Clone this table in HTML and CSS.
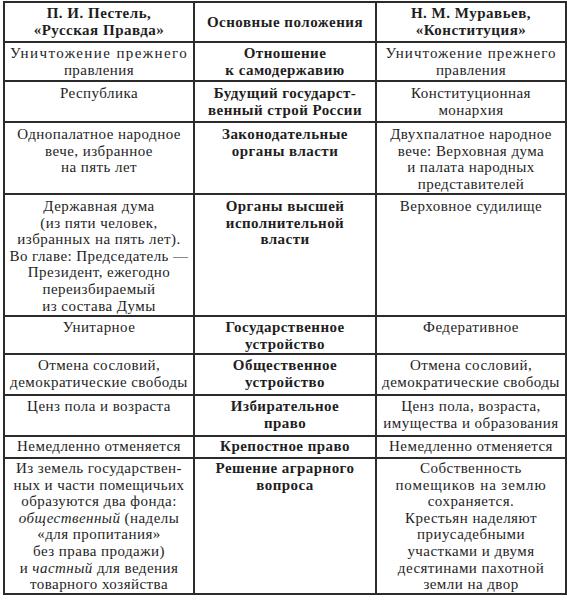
FILE: index.html
```html
<!DOCTYPE html>
<html lang="ru">
<head>
<meta charset="utf-8">
<link rel="stylesheet" href="styles.css">
</head>
<body>
<table class="grid">
  <colgroup><col class="c1"><col class="c2"><col class="c3"></colgroup>
  <tr class="head">
    <th>П. И. Пестель,<br>«Русская Правда»</th>
    <th>Основные положения</th>
    <th>Н. М. Муравьев,<br>«Конституция»</th>
  </tr>
  <tr class="r1">
    <td><span class="wide">Уничтожение прежнего</span><br>правления</td>
    <td class="key">Отношение<br>к самодержавию</td>
    <td><span class="semi">Уничтожение прежнего</span><br>правления</td>
  </tr>
  <tr class="r2">
    <td>Республика</td>
    <td class="key">Будущий государст-<br>венный строй России</td>
    <td>Конституционная<br>монархия</td>
  </tr>
  <tr class="r3">
    <td>Однопалатное народное<br>вече, избранное<br>на пять лет</td>
    <td class="key">Законодательные<br>органы власти</td>
    <td>Двухпалатное народное<br>вече: Верховная дума<br>и палата народных<br>представителей</td>
  </tr>
  <tr class="r4">
    <td>Державная дума<br>(из пяти человек,<br>избранных на пять лет).<br>Во главе: Председатель —<br>Президент, ежегодно<br>переизбираемый<br>из состава Думы</td>
    <td class="key">Органы высшей<br>исполнительной<br>власти</td>
    <td>Верховное судилище</td>
  </tr>
  <tr class="r5">
    <td>Унитарное</td>
    <td class="key">Государственное<br>устройство</td>
    <td>Федеративное</td>
  </tr>
  <tr class="r6">
    <td>Отмена сословий,<br>демократические свободы</td>
    <td class="key">Общественное<br>устройство</td>
    <td>Отмена сословий,<br>демократические свободы</td>
  </tr>
  <tr class="r7">
    <td>Ценз пола и возраста</td>
    <td class="key">Избирательное<br>право</td>
    <td>Ценз пола, возраста,<br>имущества и образования</td>
  </tr>
  <tr class="r8">
    <td>Немедленно отменяется</td>
    <td class="key">Крепостное право</td>
    <td>Немедленно отменяется</td>
  </tr>
  <tr class="r9">
    <td>Из земель государствен-<br>ных и части помещичьих<br>образуются два фонда:<br><i>общественный</i> (наделы<br>«для пропитания»<br>без права продажи)<br>и <i>частный</i> для ведения<br>товарного хозяйства</td>
    <td class="key">Решение аграрного<br>вопроса</td>
    <td>Собственность<br><span class="semi2">помещиков на землю</span><br>сохраняется.<br>Крестьян наделяют<br>приусадебными<br>участками и двумя<br>десятинами пахотной<br>земли на двор</td>
  </tr>
</table>
</body>
</html>
```
FILE: styles.css
```css
html, body {
  margin: 0;
  padding: 0;
  background: #ffffff;
}
body {
  padding: 1px 0 0 3px;
  font-family: "Liberation Serif", "Times New Roman", serif;
  font-size: 15px;
  letter-spacing: 0.45px;
  color: #1e1e1e;
}
.grid {
  border-collapse: collapse;
  table-layout: fixed;
  width: 562px;
}
.c1 { width: 190px; }
.c2 { width: 182px; }
.c3 { width: 190px; }
.grid th,
.grid td {
  border: 2px solid #2b2b2b;
  padding: 2px 1px 0;
  text-align: center;
  vertical-align: top;
  line-height: 16.6px;
  white-space: nowrap;
}
.grid th {
  font-weight: bold;
  vertical-align: middle;
  padding: 1px 1px;
  line-height: 17px;
  letter-spacing: 0.5px;
}
.grid td.key {
  font-weight: bold;
}
.wide { letter-spacing: 1.4px; }
.semi { letter-spacing: 1.05px; }
.semi2 { letter-spacing: 0.9px; }
.head { height: 40px; }
.r1 { height: 39px; }
.r2 { height: 41px; }
.r3 { height: 72px; }
.r4 { height: 122px; }
.r5 { height: 38px; }
.r6 { height: 41px; }
.r7 { height: 41px; }
.r8 { height: 22px; }
.r9 { height: 135px; }
.r2 td { padding-top: 3px; }
.r3 td { padding-top: 3px; }
.r4 td { padding-top: 3px; }
.r8 td { padding-top: 1px; padding-bottom: 0; }
.r9 td { padding-top: 1px; }
```
